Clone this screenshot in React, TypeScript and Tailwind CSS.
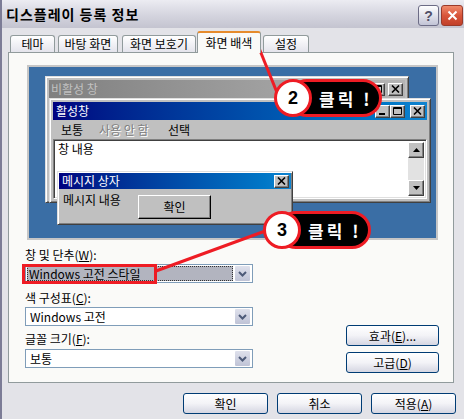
import React from "react";

function CapBtn({ kind }: { kind: "min" | "max" | "close" }) {
  return (
    <div className="w-[15px] h-[13px] bg-[#c0c0c0] border border-t-white border-l-white border-r-[#404040] border-b-[#404040] shadow-[inset_-1px_-1px_#808080] flex items-center justify-center">
      <svg width="9" height="8" viewBox="0 0 9 8">
        {kind === "min" && <rect x="1" y="6" width="6" height="2" fill="#000" />}
        {kind === "max" && (
          <path d="M0.5 0.5H8.5V7.5H0.5Z M0.5 1.5H8.5" stroke="#000" strokeWidth="1" fill="none" />
        )}
        {kind === "close" && (
          <path d="M1 0.5L8 7.5M8 0.5L1 7.5" stroke="#000" strokeWidth="1.6" fill="none" />
        )}
      </svg>
    </div>
  );
}

function ScrollBtn({ up }: { up: boolean }) {
  return (
    <div className="w-[16px] h-[16px] bg-[#c0c0c0] border border-t-white border-l-white border-r-[#404040] border-b-[#404040] shadow-[inset_-1px_-1px_#808080] flex items-center justify-center">
      <svg width="7" height="4" viewBox="0 0 7 4">
        {up ? <path d="M3.5 0L7 4H0Z" fill="#000" /> : <path d="M0 0H7L3.5 4Z" fill="#000" />}
      </svg>
    </div>
  );
}

function DropBtn() {
  return (
    <div className="w-[17px] h-[17px] border border-white rounded-[2px] bg-linear-to-b from-[#dfe1ec] to-[#bfc3d6] flex items-center justify-center">
      <svg width="9" height="6" viewBox="0 0 9 6">
        <path d="M1 1L4.5 4.5L8 1" stroke="#4d5a78" strokeWidth="2" fill="none" />
      </svg>
    </div>
  );
}

function XpButton({ children, w }: { children: React.ReactNode; w: string }) {
  return (
    <div
      className={`${w} h-[21px] rounded-[3px] border border-[#003c74] bg-linear-to-b from-white via-[#f3f3f7] to-[#d5d6e2] flex items-center justify-center text-[12px] leading-none`}
    >
      {children}
    </div>
  );
}

function Badge({ num, pos }: { num: string; pos: string }) {
  return (
    <div className={`absolute ${pos} h-[38px] w-[108px]`}>
      <div className="absolute left-[14px] right-0 top-0 bottom-0 rounded-full bg-black border-[3px] border-[#ee1c24] flex items-center pl-[28px]">
        <span className="text-white font-bold text-[17px] tracking-[3px] leading-none">클릭 !</span>
      </div>
      <div className="absolute left-0 top-0 w-[38px] h-[38px] rounded-full bg-white border-[3px] border-[#ee1c24] flex items-center justify-center">
        <span className="text-black font-bold text-[18px] leading-none font-['Liberation_Sans',sans-serif]">{num}</span>
      </div>
    </div>
  );
}

export default function App() {
  return (
    <div className="relative w-[464px] h-[419px] overflow-hidden bg-[#e3e3e8] font-['Noto_Sans_CJK_KR','Noto_Sans',sans-serif] text-black">
      <div className="flex flex-col h-full border-l-2 border-l-[#7c7c96]">
        {/* title bar */}
        <div className="h-[28px] flex items-center pl-[4px] bg-linear-to-b from-[#ececf2] via-[#d6d6e0] to-[#c4c4d0]">
          <span className="font-bold text-[14px] tracking-[1px] text-black">디스플레이 등록 정보</span>
          <div className="ml-auto flex gap-[2px] pr-[1px] mt-[3px]">
            <div className="w-[21px] h-[21px] rounded-[3px] border border-[#6c6c86] bg-linear-to-b from-white to-[#c2c4d6] flex items-center justify-center">
              <span className="font-bold text-[14px] text-[#505068] leading-none font-['Liberation_Sans',sans-serif]">?</span>
            </div>
            <div className="w-[22px] h-[21px] rounded-[3px] border border-[#9a3a2a] bg-linear-to-b from-[#f08a6c] via-[#d8553a] to-[#c2402a] flex items-center justify-center">
              <svg width="11" height="11" viewBox="0 0 11 11">
                <path d="M1.5 1.5L9.5 9.5M9.5 1.5L1.5 9.5" stroke="#fff" strokeWidth="2" />
              </svg>
            </div>
          </div>
        </div>

        {/* tabs */}
        <div className="h-[24px] flex items-end pl-[8px] text-[12px]">
          <div className="ml-0 w-[45px] h-[17px] border border-b-0 border-[#919b9c] rounded-t-[3px] bg-linear-to-b from-white to-[#e4e4ec] flex items-center justify-center">테마</div>
          <div className="ml-[3px] w-[60px] h-[17px] border border-b-0 border-[#919b9c] rounded-t-[3px] bg-linear-to-b from-white to-[#e4e4ec] flex items-center justify-center">바탕 화면</div>
          <div className="ml-[4px] w-[74px] h-[17px] border border-b-0 border-[#919b9c] rounded-t-[3px] bg-linear-to-b from-white to-[#e4e4ec] flex items-center justify-center">화면 보호기</div>
          <div className="relative z-10 ml-[1px] w-[64px] h-[22px] -mb-[1px] border border-b-0 border-[#919b9c] border-t-2 border-t-[#e68b2c] rounded-t-[3px] bg-[#fafaf8] flex items-center justify-center">화면 배색</div>
          <div className="ml-[2px] w-[46px] h-[17px] border border-b-0 border-[#919b9c] rounded-t-[3px] bg-linear-to-b from-white to-[#e4e4ec] flex items-center justify-center">설정</div>
        </div>

        {/* panel */}
        <div className="ml-[6px] w-[446px] h-[331px] shrink-0 border border-[#919b9c] bg-[#fafaf8] flex flex-col">
          {/* preview */}
          <div className="relative ml-[18px] mt-[12px] w-[411px] h-[175px] shrink-0 border-2 border-[#c6c6c6] bg-[#3a6ea5] text-[12px]">
            {/* inactive window */}
            <div className="absolute left-[16px] top-[9px] w-[364px] h-[127px] bg-[#c0c0c0] border border-t-[#dfdfdf] border-l-[#dfdfdf] border-r-[#404040] border-b-[#404040] shadow-[inset_1px_1px_#fff,inset_-1px_-1px_#808080] p-[3px]">
              <div className="h-[18px] flex items-center pl-[2px] pr-[2px] bg-linear-to-r from-[#808080] to-[#b5b5b5]">
                <span className="text-[#c0c0c0]">비활성 창</span>
                <div className="ml-auto flex items-center">
                  <CapBtn kind="min" />
                  <CapBtn kind="max" />
                  <div className="w-[3px]" />
                  <CapBtn kind="close" />
                </div>
              </div>
            </div>

            {/* active window */}
            <div className="absolute left-[20px] top-[31px] w-[382px] h-[105px] bg-[#c0c0c0] border border-t-[#dfdfdf] border-l-[#dfdfdf] border-r-[#404040] border-b-[#404040] shadow-[inset_1px_1px_#fff,inset_-1px_-1px_#808080] p-[3px] flex flex-col">
              <div className="h-[18px] shrink-0 flex items-center pl-[3px] pr-[2px] bg-linear-to-r from-[#000080] to-[#1084d0]">
                <span className="text-white">활성창</span>
                <div className="ml-auto flex items-center">
                  <CapBtn kind="min" />
                  <CapBtn kind="max" />
                  <div className="w-[5px]" />
                  <CapBtn kind="close" />
                </div>
              </div>
              <div className="h-[19px] shrink-0 flex items-center pl-[8px]">
                <span className="w-[38px]">보통</span>
                <span className="w-[69px] text-[#808080] [text-shadow:1px_1px_0_#fff]">사용 안 함</span>
                <span>선택</span>
              </div>
              <div className="h-[60px] shrink-0 flex bg-white border border-t-[#808080] border-l-[#808080] border-r-white border-b-white shadow-[inset_1px_1px_#404040,inset_-1px_-1px_#dfdfdf] p-[2px]">
                <div className="flex-1 pl-[2px] leading-[14px]">창 내용</div>
                <div className="w-[16px] flex flex-col bg-[#e2e2e2]">
                  <ScrollBtn up />
                  <div className="flex-1" />
                  <ScrollBtn up={false} />
                </div>
              </div>
            </div>

            {/* message box */}
            <div className="absolute left-[28px] top-[104px] w-[236px] h-[54px] bg-[#c0c0c0] border border-t-[#dfdfdf] border-l-[#dfdfdf] border-r-[#404040] border-b-[#404040] shadow-[inset_1px_1px_#fff,inset_-1px_-1px_#808080] p-[1px] flex flex-col">
              <div className="h-[16px] shrink-0 flex items-center pl-[3px] pr-[2px] bg-linear-to-r from-[#000080] to-[#1084d0]">
                <span className="text-white">메시지 상자</span>
                <div className="ml-auto">
                  <CapBtn kind="close" />
                </div>
              </div>
              <div className="flex items-start pl-[4px]">
                <span className="w-[75px] mt-[2px]">메시지 내용</span>
                <div className="mt-[6px] w-[73px] h-[24px] bg-[#c0c0c0] border border-t-white border-l-white border-r-black border-b-black shadow-[inset_-1px_-1px_#808080] flex items-center justify-center">
                  확인
                </div>
              </div>
            </div>
          </div>

          {/* lower section */}
          <div className="flex text-[12px]">
            <div className="ml-[16px] w-[228px] flex flex-col pt-[7px]">
              <div className="h-[15px] leading-[15px]">
                창 및 단추(<u>W</u>):
              </div>
              <div className="mt-[2px] h-[19px] border border-[#7f9db9] bg-white flex items-center pl-[1px] pr-[1px]">
                <div className="flex-1 h-[15px] bg-[#b2b4bf] outline-1 outline-dotted outline-[#333] -outline-offset-1 flex items-center pl-[2px] leading-none">
                  Windows 고전 스타일
                </div>
                <div className="ml-[1px]">
                  <DropBtn />
                </div>
              </div>
              <div className="mt-[7px] h-[15px] leading-[15px]">
                색 구성표(<u>C</u>):
              </div>
              <div className="mt-[2px] h-[19px] border border-[#7f9db9] bg-white flex items-center pr-[1px]">
                <div className="flex-1 pl-[4px] leading-none">Windows 고전</div>
                <DropBtn />
              </div>
              <div className="mt-[5px] h-[15px] leading-[15px]">
                글꼴 크기(<u>F</u>):
              </div>
              <div className="mt-[3px] h-[19px] border border-[#7f9db9] bg-white flex items-center pr-[1px]">
                <div className="flex-1 pl-[4px] leading-none">보통</div>
                <DropBtn />
              </div>
            </div>
            <div className="ml-[93px] w-[93px] pt-[85px] flex flex-col gap-[6px]">
              <XpButton w="w-[93px]">
                효과(<u>E</u>)...
              </XpButton>
              <XpButton w="w-[93px]">
                고급(<u>D</u>)
              </XpButton>
            </div>
          </div>
        </div>

        {/* bottom buttons */}
        <div className="flex pl-[181px] pt-[10px] gap-[9px]">
          <XpButton w="w-[85px]">확인</XpButton>
          <XpButton w="w-[85px]">취소</XpButton>
          <XpButton w="w-[85px]">
            적용(<u>A</u>)
          </XpButton>
        </div>
      </div>

      {/* annotations */}
      <div className="absolute left-[198px] top-[32px] w-[62px] h-[19px] border-[3px] border-[#ee1c24]" />
      <div className="absolute left-[22px] top-[264px] w-[135px] h-[20px] border-[3px] border-[#ee1c24]" />
      <svg className="absolute left-0 top-0 pointer-events-none" width="464" height="419" viewBox="0 0 464 419">
        <line x1="259" y1="48" x2="280" y2="100" stroke="#ee1c24" strokeWidth="3" />
        <line x1="156" y1="271" x2="268" y2="230" stroke="#ee1c24" strokeWidth="3" />
      </svg>
      <Badge num="2" pos="left-[274px] top-[79px]" />
      <Badge num="3" pos="left-[263px] top-[211px]" />
    </div>
  );
}
